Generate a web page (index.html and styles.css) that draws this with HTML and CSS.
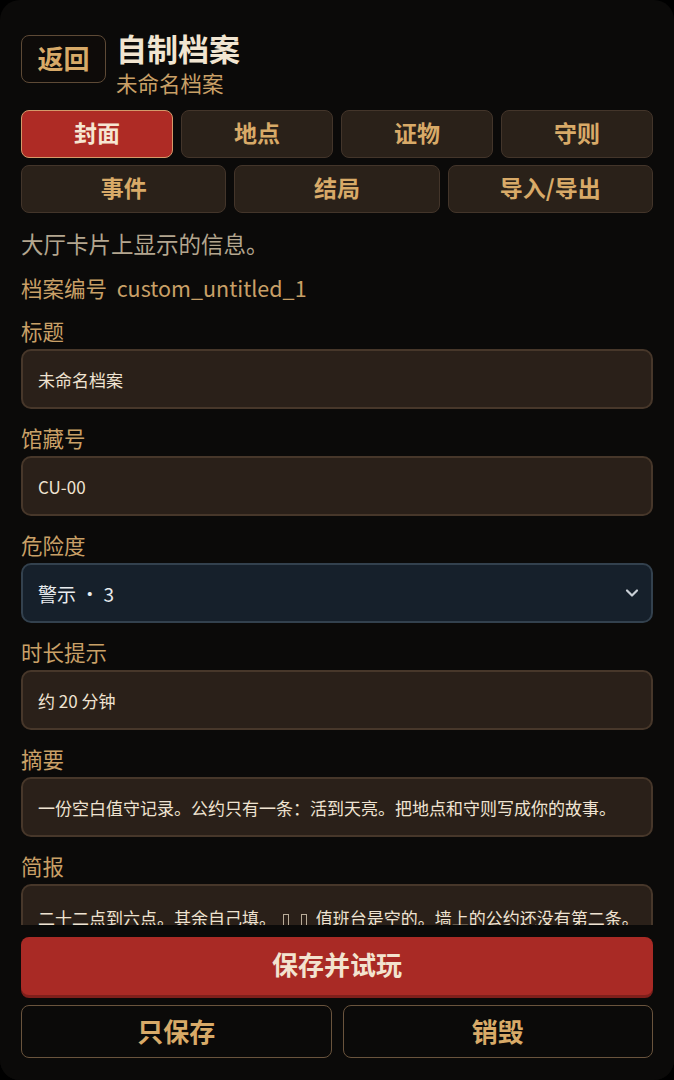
FILE: index.html
```html
<!DOCTYPE html>
<html lang="zh-CN">
  <head>
    <meta charset="UTF-8" />
    <title>自制档案</title>
    <link rel="stylesheet" href="styles.css">
  </head>

  <body>
    <div class="panel">
      <div class="scroll">
        <header>
          <button class="back">返回</button>
          <div class="titles">
            <h1>自制档案</h1>
            <p class="sub">未命名档案</p>
          </div>
        </header>

        <nav class="tabs four">
          <button class="tab valgt">封面</button>
          <button class="tab">地点</button>
          <button class="tab">证物</button>
          <button class="tab">守则</button>
        </nav>
        <nav class="tabs three">
          <button class="tab">事件</button>
          <button class="tab">结局</button>
          <button class="tab">导入/导出</button>
        </nav>

        <main>
          <p class="intro">大厅卡片上显示的信息。</p>
          <p class="fileid">档案编号&nbsp; custom_untitled_1</p>

          <label class="field">
            <span class="label">标题</span>
            <input class="box" type="text" value="未命名档案">
          </label>

          <label class="field">
            <span class="label">馆藏号</span>
            <input class="box" type="text" value="CU-00">
          </label>

          <label class="field">
            <span class="label">危险度</span>
            <span class="selectwrap">
              <select class="box select">
                <option>警示 ・ 3</option>
              </select>
              <svg class="chev" width="14" height="10" viewBox="0 0 14 10">
                <path d="M2 2.5 L7 7.5 L12 2.5" fill="none" stroke="#c9cfd6" stroke-width="2.2" stroke-linecap="round" stroke-linejoin="round"/>
              </svg>
            </span>
          </label>

          <label class="field">
            <span class="label">时长提示</span>
            <input class="box" type="text" value="约 20 分钟">
          </label>

          <label class="field">
            <span class="label">摘要</span>
            <input class="box" type="text" value="一份空白值守记录。公约只有一条：活到天亮。把地点和守则写成你的故事。">
          </label>

          <div class="field">
            <span class="label">简报</span>
            <div class="box area">二十二点到六点。其余自己填。<i class="tofu"></i><i class="tofu"></i> 值班台是空的。墙上的公约还没有第二条。</div>
          </div>
        </main>
      </div>

      <footer>
        <button class="play">保存并试玩</button>
        <div class="row">
          <button class="ghost">只保存</button>
          <button class="ghost">销毁</button>
        </div>
      </footer>
    </div>
  </body>
</html>
```

FILE: styles.css
```css
* {
  box-sizing: border-box;
}

body {
  margin: 0;
  background: #000;
  font-family: "Noto Sans CJK SC", "Noto Sans", sans-serif;
}

.panel {
  height: 1080px;
  background: #0b0a09;
  border-radius: 20px;
  display: flex;
  flex-direction: column;
  overflow: hidden;
}

.scroll {
  height: 925px;
  overflow: hidden;
  padding: 30px 21px 0;
}

header {
  display: flex;
  align-items: flex-start;
  gap: 10px;
}

button {
  font-family: inherit;
  cursor: pointer;
  line-height: 1;
}

.back {
  margin-top: 5px;
  width: 85px;
  height: 48px;
  background: #0e0b09;
  border: 1px solid #5e4a36;
  border-radius: 8px;
  color: #d8aa68;
  font-size: 26px;
  font-weight: 700;
  padding: 0 0 3px;
}

h1 {
  margin: 0;
  font-size: 31px;
  line-height: 36px;
  color: #f1e5d1;
  font-weight: 700;
}

.sub {
  margin: 4px 0 0;
  font-size: 21.5px;
  line-height: 26px;
  color: #c9a067;
}

.tabs {
  display: grid;
  gap: 8px;
}
.tabs.four {
  grid-template-columns: repeat(4, 1fr);
  margin-top: 14px;
}
.tabs.three {
  grid-template-columns: repeat(3, 1fr);
  margin-top: 7px;
}

.tab {
  height: 48px;
  background: #2a2119;
  border: 1px solid #43352a;
  border-radius: 8px;
  color: #d8aa68;
  font-size: 23px;
  font-weight: 700;
  padding: 0 0 3px;
}

.valgt {
  background: #ae2b25;
  border-color: #d49a6a;
  color: #f6e6d2;
}

main {
  display: flex;
  flex-direction: column;
  gap: 15px;
  margin-top: 16px;
}

main p {
  margin: 0;
  font-size: 21.5px;
  line-height: 28px;
}

.intro {
  color: #b4a68f;
  font-size: 22.5px !important;
}

.fileid {
  color: #c9a067;
  margin-top: 2px !important;
}

.field {
  display: flex;
  flex-direction: column;
  gap: 4px;
}

.label {
  font-size: 21.5px;
  line-height: 28px;
  color: #c9a067;
}

.box {
  height: 60px;
  width: 100%;
  background: #2a2019;
  border: 2px solid #47372a;
  border-radius: 10px;
  padding: 0 15px;
  font-family: inherit;
  font-size: 17px;
  color: #efe3d1;
  outline: none;
}

.selectwrap {
  position: relative;
  display: block;
}

.select {
  appearance: none;
  background: #16202b;
  border-color: #33414e;
  color: #e9ecef;
  font-size: 19px;
}

.chev {
  position: absolute;
  right: 14px;
  top: 25px;
}

.area {
  height: 80px;
  padding-top: 19px;
  line-height: 26px;
  white-space: nowrap;
  overflow: hidden;
}

.tofu {
  display: inline-block;
  width: 6px;
  height: 12px;
  border: 1px solid #b8ab98;
  margin: 0 5px 0 7px;
  vertical-align: -1px;
}

footer {
  padding: 12px 21px 22px;
  background: #0b0a09;
}

.play {
  width: 100%;
  height: 58px;
  background: #a92a25;
  border: none;
  border-radius: 8px;
  box-shadow: 0 3px 0 #7e1f1b;
  color: #f3e3cf;
  font-size: 26px;
  font-weight: 700;
  padding: 0 0 4px;
}

.row {
  display: grid;
  grid-template-columns: 1fr 1fr;
  gap: 11px;
  margin-top: 10px;
}

.ghost {
  height: 53px;
  background: #0b0a09;
  border: 1px solid #6a543d;
  border-radius: 8px;
  color: #d8aa68;
  font-size: 26px;
  font-weight: 700;
  padding: 0 0 2px;
}
```
